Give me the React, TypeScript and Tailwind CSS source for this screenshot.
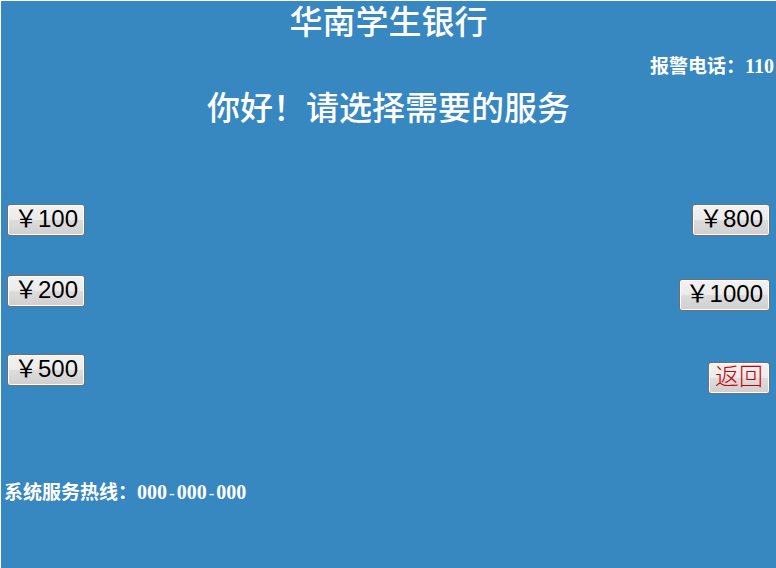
import type { ReactNode } from "react";

type CashButtonProps = {
  children: ReactNode;
  tone?: "cash" | "back";
};

function CashButton({ children, tone = "cash" }: CashButtonProps) {
  const color = tone === "back" ? "text-[#cc0000] font-light" : "text-black";
  return (
    <button
      type="button"
      className={`flex h-8 items-center whitespace-nowrap rounded-[3px] border border-[#707070] bg-[linear-gradient(#f2f2f2,#ebebeb_50%,#dddddd_50%,#cfcfcf)] px-[6px] pb-[2px] text-[24px] leading-7 shadow-[inset_0_0_0_1px_#fcfcfc] ${color}`}
    >
      {children}
    </button>
  );
}

export default function App() {
  return (
    <div className="min-h-screen bg-white pl-px pt-px font-['Liberation_Sans','Noto_Sans_CJK_SC',sans-serif]">
      <main className="flex min-h-[calc(100vh-1px)] flex-col bg-[#3787c0] font-medium text-white">
        <header className="font-['Liberation_Serif','Noto_Sans_CJK_SC',serif]">
          <h1 className="text-center text-[33px] leading-[44px]">华南学生银行</h1>
          <p className="mt-[9px] pr-[2px] text-right text-[19px] font-bold leading-6">
            报警电话：<span className="text-[20px]">110</span>
          </p>
          <h2 className="mt-2 text-center text-[33px] leading-[44px]">你好！请选择需要的服务</h2>
        </header>
        <section className="mt-[73px] flex justify-between px-[6px] font-normal">
          <div className="flex flex-col items-start">
            <CashButton>￥100</CashButton>
            <div className="mt-[39px]">
              <CashButton>￥200</CashButton>
            </div>
            <div className="mt-[47px]">
              <CashButton>￥500</CashButton>
            </div>
          </div>
          <div className="flex flex-col items-end">
            <CashButton>￥800</CashButton>
            <div className="mt-[43px]">
              <CashButton>￥1000</CashButton>
            </div>
            <div className="mt-[51px]">
              <CashButton tone="back">返回</CashButton>
            </div>
          </div>
        </section>
        <footer className="mt-[86px] pl-[3px] font-['Liberation_Serif','Noto_Sans_CJK_SC',serif] text-[19px] font-bold leading-6">
          系统服务热线：
          <span className="text-[20px]">
            000<span className="font-['Liberation_Mono',monospace] font-normal text-[16px]">-</span>000<span className="font-['Liberation_Mono',monospace] font-normal text-[16px]">-</span>000
          </span>
        </footer>
      </main>
    </div>
  );
}
